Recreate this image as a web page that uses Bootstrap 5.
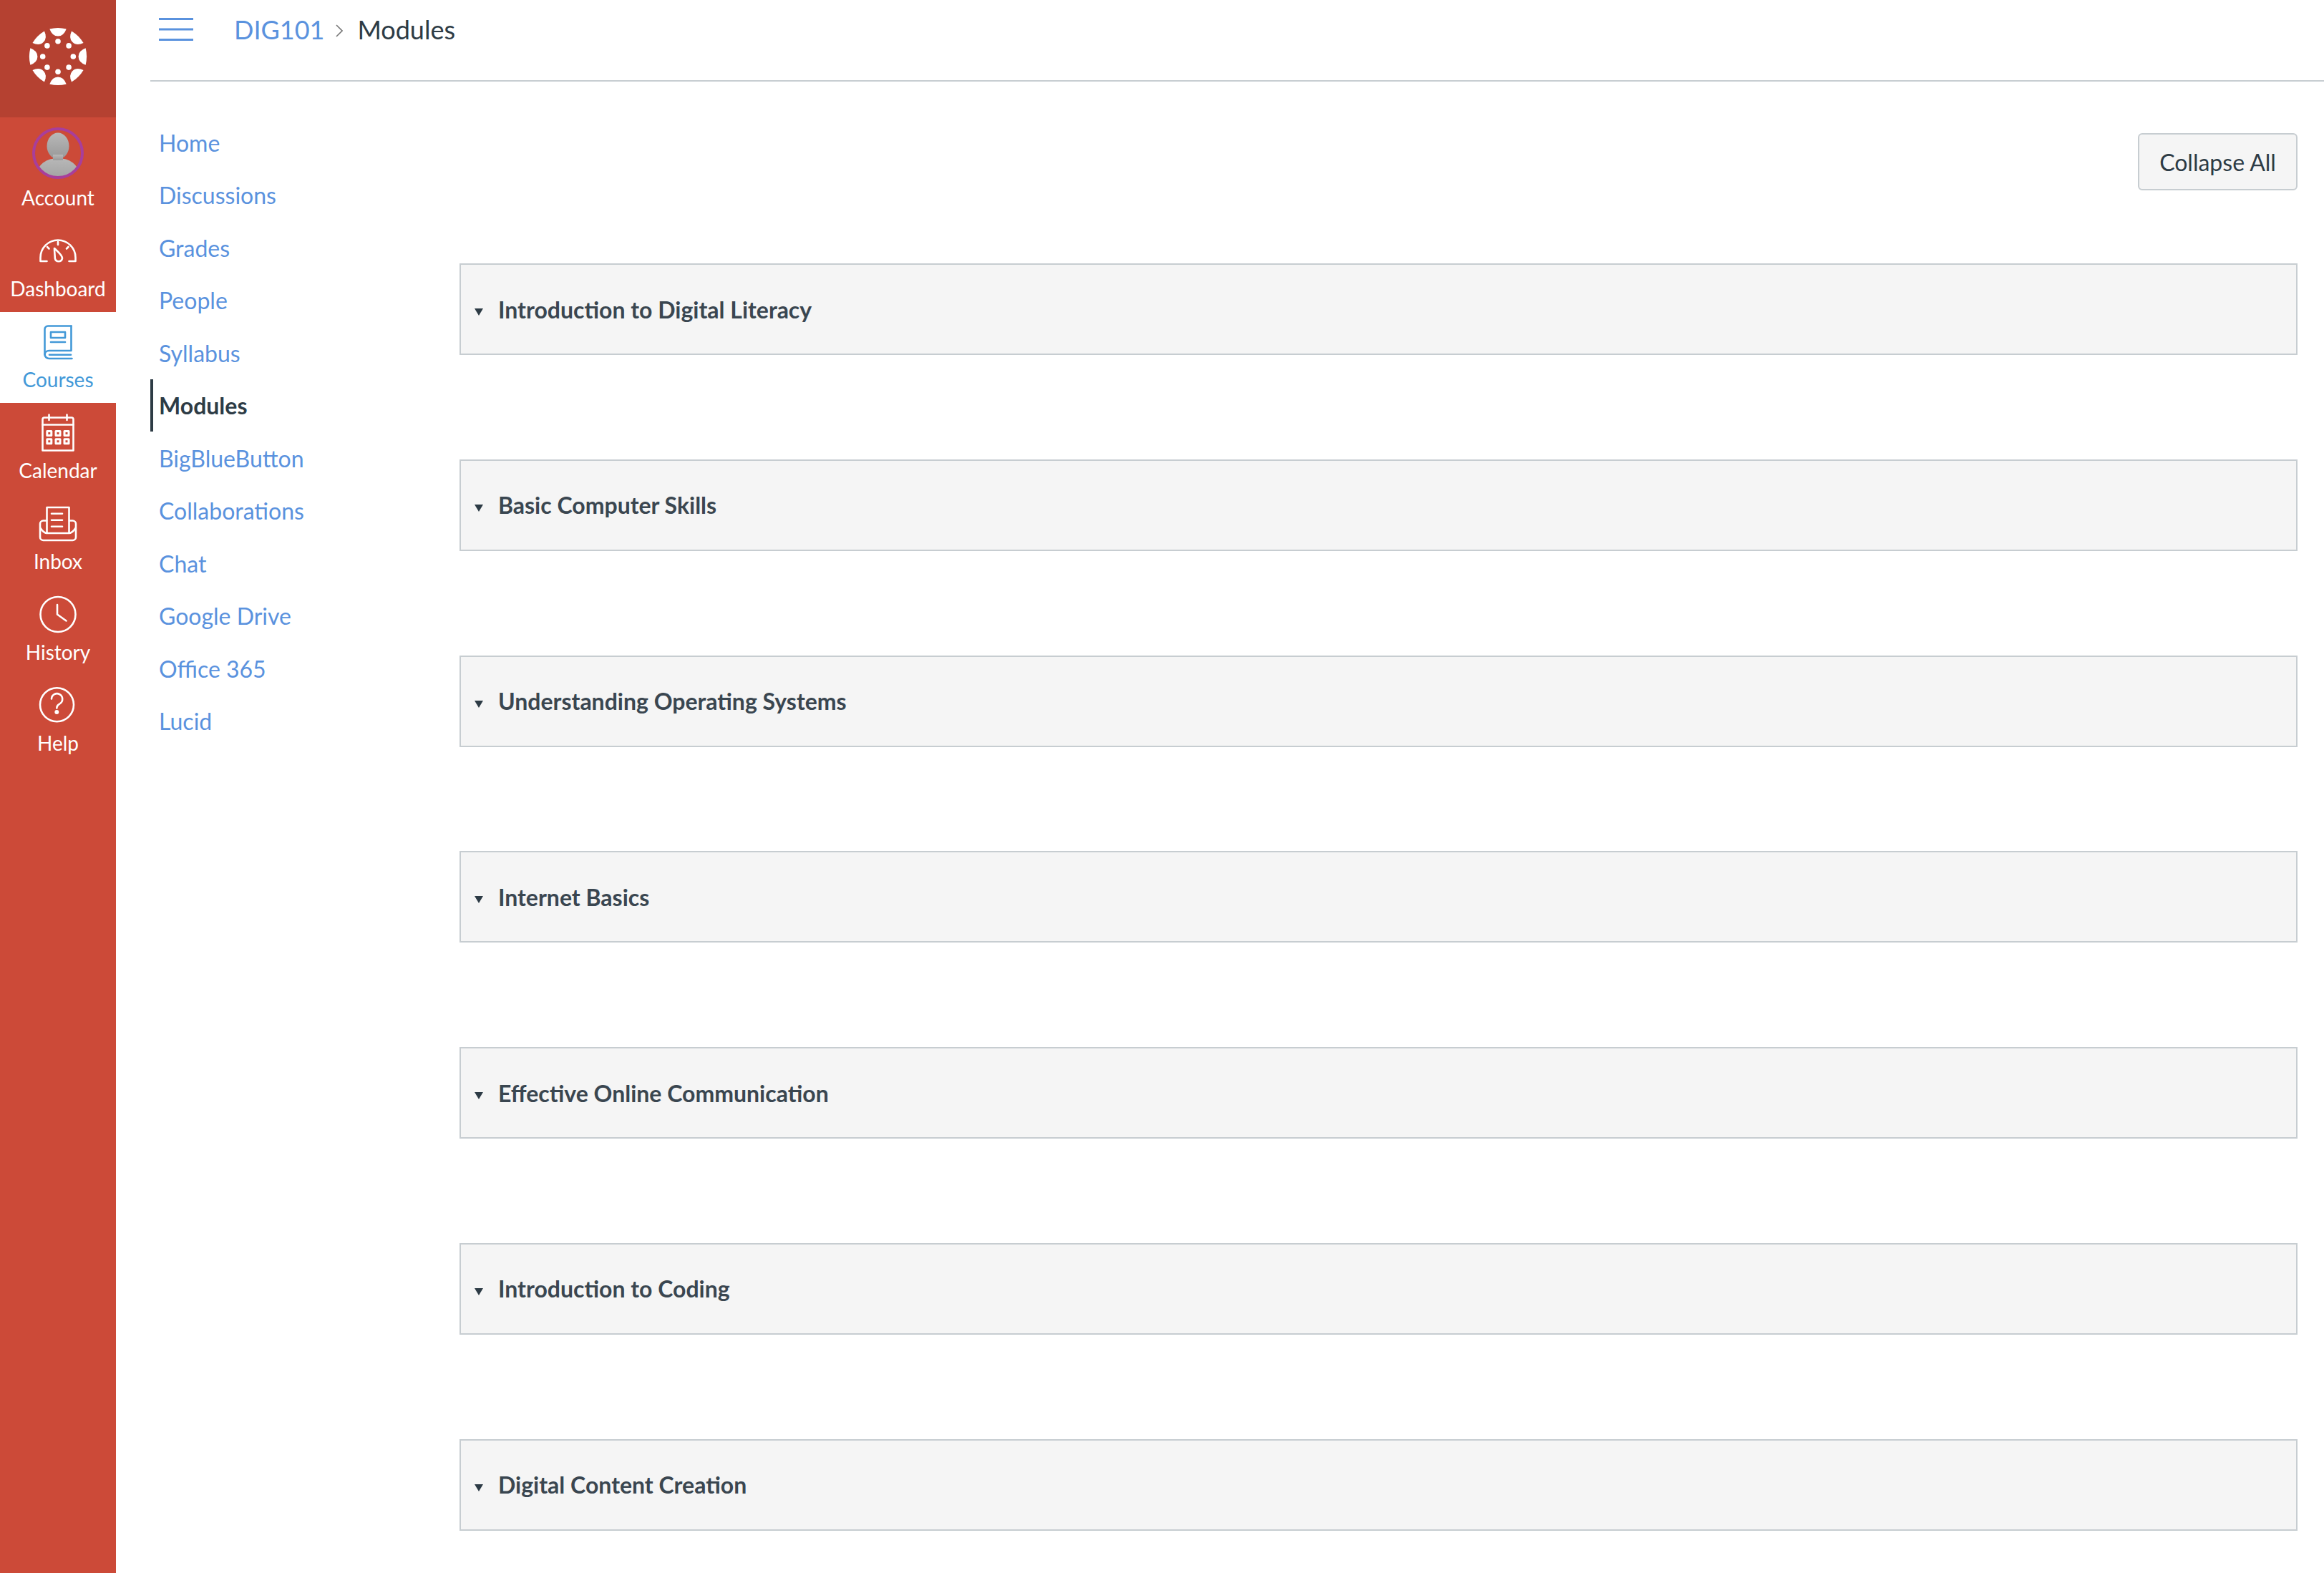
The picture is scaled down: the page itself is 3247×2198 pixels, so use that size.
<!doctype html>
<html lang="en">
<head>
<meta charset="utf-8">
<title>Modules</title>
<link href="https://cdn.jsdelivr.net/npm/bootstrap@5.3.0/dist/css/bootstrap.min.css" rel="stylesheet">
<style>
html,body{height:100%;overflow:hidden}
body{font-family:"Lato","Liberation Sans",sans-serif;color:#2d3b45;font-size:32px;background:#fff}
.shell{min-height:2198px}
.gnav{width:162px;flex:none;background:#cc4a38;color:#fff}
.gnav-logo{height:164px;background:#b54131;padding-bottom:6px}
.gnav-item{height:127px;padding-top:11px;color:#fff;text-decoration:none;font-size:28px;line-height:34px}
.gnav-item svg{display:block;fill:none;stroke:currentColor;stroke-width:2.6;stroke-linecap:round;stroke-linejoin:round}
.gnav-item span{margin-top:6px}
.gnav-account{height:145px;padding-top:14px}
.gnav-account span{margin-top:9px}
.gnav-active{background:#fff;color:#4399d8}
.work{min-width:0}
.topstrip{margin-left:48px;border-bottom:2px solid #c7cdd1;height:114px;padding-left:12px;padding-bottom:30px}
.burger{width:48px;height:32px;margin-right:57px;flex:none;padding:0;border:0;background:none}
.burger svg{display:block}
.trail{font-size:36px;line-height:40px;margin:0}
.trail a{color:#5a92de;text-decoration:none}
.trail .sep{width:10px;height:18px;margin:4px 20px 0 16px}
.coursenav{width:432px;flex:none;margin-left:48px;padding-top:48px}
.coursenav a{height:73.5px;padding-left:8px;padding-top:2px;color:#5a92de;text-decoration:none;border-left:4px solid transparent;line-height:1}
.coursenav a.on{color:#2d3b45;font-weight:700;border-left-color:#2d3b45}
.modcol{padding:72px 37px 0 0;min-width:0}
.btn.collapse-btn{height:80px;width:223px;padding:1px 0 0;font-size:32px;color:#2d3b45;background:#f5f5f5;border:2px solid #c7cdd1;border-radius:6px;margin-bottom:102px}
.modrow{height:128px;margin-bottom:145.8px;background:#f5f5f5;border:2px solid #c7cdd1;padding:1px 0 0 19px;font-weight:700;font-size:32px;color:#3a4650}
.modrow svg{margin:7px 21px 0 0;flex:none}
</style>
</head>
<body>
<div class="d-flex shell">
  <nav class="gnav d-flex flex-column">
    <div class="gnav-logo d-flex align-items-center justify-content-center">
      <svg width="90" height="90" viewBox="-45 -45 90 90" fill="#fff" aria-label="Canvas">
        <g id="lg">
          <path id="wd" d="M-11.7-38.6Q0-41.6 11.7-38.6Q8-28.6 0-28.6Q-8-28.6-11.7-38.6Z"/>
          <use href="#wd" transform="rotate(45)"/><use href="#wd" transform="rotate(90)"/><use href="#wd" transform="rotate(135)"/><use href="#wd" transform="rotate(180)"/><use href="#wd" transform="rotate(225)"/><use href="#wd" transform="rotate(270)"/><use href="#wd" transform="rotate(315)"/>
          <circle cx="0" cy="-21.3" r="3.8"/><circle cx="15.1" cy="-15.1" r="3.8"/><circle cx="21.3" cy="0" r="3.8"/><circle cx="15.1" cy="15.1" r="3.8"/><circle cx="0" cy="21.3" r="3.8"/><circle cx="-15.1" cy="15.1" r="3.8"/><circle cx="-21.3" cy="0" r="3.8"/><circle cx="-15.1" cy="-15.1" r="3.8"/>
        </g>
      </svg>
    </div>
    <a href="#" class="gnav-item gnav-account d-flex flex-column align-items-center">
      <svg width="72" height="72" viewBox="0 0 72 72" style="stroke:none">
        <defs>
          <linearGradient id="pg" x1="0" y1="0" x2="0" y2="1"><stop offset="0" stop-color="#b8b8b8"/><stop offset="1" stop-color="#989898"/></linearGradient>
          <clipPath id="pc"><circle cx="36" cy="36" r="34"/></clipPath>
        </defs>
        <g clip-path="url(#pc)" fill="url(#pg)">
          <ellipse cx="36" cy="26" rx="15.5" ry="18.5"/>
          <ellipse cx="36" cy="64" rx="29" ry="21"/>
          <rect x="29" y="38" width="14" height="8"/>
        </g>
        <circle cx="36" cy="36" r="34" fill="none" stroke="#a83e9b" stroke-width="4"/>
      </svg>
      <span>Account</span>
    </a>
    <a href="#" class="gnav-item d-flex flex-column align-items-center">
      <svg width="60" height="60" viewBox="0 0 60 60">
        <path d="M14.5 45H5.5V40A24.5 24.5 0 0 1 54.5 40V45H45.5"/>
        <path d="M30 18V22M15 25L17.5 27.5M44.5 25L42 27.5"/>
        <path d="M25 27C29 31 36 36 36 41A5.2 5.2 0 0 1 25.8 41C25.8 37 25 32 25 27Z"/>
      </svg>
      <span>Dashboard</span>
    </a>
    <a href="#" class="gnav-item gnav-active d-flex flex-column align-items-center">
      <svg width="60" height="60" viewBox="0 0 60 60">
        <path d="M48.5 8.5H16A4.5 4.5 0 0 0 11.5 13V48A6 6 0 0 0 17.5 54H49.5"/>
        <path d="M48.5 8.5V43H17.5A6 6 0 0 0 11.5 48.5"/>
        <path d="M18 48.8H48"/>
        <rect x="20" y="17" width="20" height="8"/>
        <path d="M20 31H40"/>
      </svg>
      <span>Courses</span>
    </a>
    <a href="#" class="gnav-item d-flex flex-column align-items-center">
      <svg width="60" height="60" viewBox="0 0 60 60">
        <path d="M11 9.5H49A2.5 2.5 0 0 1 51.5 12V55.5H8.5V12A2.5 2.5 0 0 1 11 9.5Z"/>
        <path d="M8.5 19.5H51.5M17.5 5.5V13M42.5 5.5V13"/>
        <path d="M14.8 28.5h6v6h-6zM27 28.5h6v6h-6zM39 28.5h6v6h-6zM14.8 39.8h6v6h-6zM27 39.8h6v6h-6zM39 39.8h6v6h-6z" stroke-width="3"/>
      </svg>
      <span>Calendar</span>
    </a>
    <a href="#" class="gnav-item d-flex flex-column align-items-center">
      <svg width="60" height="60" viewBox="0 0 60 60">
        <path d="M14.5 44V8H45.5V44"/>
        <path d="M21 16.7H36M21 25.7H36M21 34.7H36"/>
        <path d="M14 26.5H9.5A4.5 4.5 0 0 0 5 31V49.5A4.5 4.5 0 0 0 9.5 54H50.5A4.5 4.5 0 0 0 55 49.5V31A4.5 4.5 0 0 0 50.5 26.5H46"/>
        <path d="M5.5 37C8 41 11 44 15 44H45C49 44 52 41 54.5 37"/>
      </svg>
      <span>Inbox</span>
    </a>
    <a href="#" class="gnav-item d-flex flex-column align-items-center">
      <svg width="60" height="60" viewBox="0 0 60 60">
        <circle cx="30" cy="30.5" r="24.5"/>
        <path d="M29 17V30.5L41.5 39.5"/>
      </svg>
      <span>History</span>
    </a>
    <a href="#" class="gnav-item d-flex flex-column align-items-center">
      <svg width="60" height="60" viewBox="0 0 60 60">
        <circle cx="28.5" cy="29.7" r="23.5"/>
        <path d="M21 21.5A7.6 7.6 0 1 1 33 28C30 30 28.3 31 28.3 34.5"/>
        <circle cx="28.3" cy="40" r="2.2" fill="currentColor" stroke-width="1.5"/>
      </svg>
      <span>Help</span>
    </a>
  </nav>
  <div class="work flex-grow-1 d-flex flex-column">
    <header class="topstrip d-flex align-items-center">
      <button class="burger" aria-label="Menu">
        <svg width="48" height="32" viewBox="0 0 48 32" stroke="#5a92de" stroke-width="2.8"><path d="M0 1.5H48M0 16H48M0 30.5H48"/></svg>
      </button>
      <ol class="trail list-unstyled d-flex align-items-center">
        <li><a href="#">DIG101</a></li>
        <li class="d-flex"><svg class="sep" viewBox="0 0 10 18" fill="none" stroke="#777" stroke-width="1.6"><path d="M1 1L9 9L1 17"/></svg></li>
        <li>Modules</li>
      </ol>
    </header>
    <div class="d-flex flex-grow-1">
      <nav class="coursenav d-flex flex-column">
        <a href="#" class="d-flex align-items-center">Home</a>
        <a href="#" class="d-flex align-items-center">Discussions</a>
        <a href="#" class="d-flex align-items-center">Grades</a>
        <a href="#" class="d-flex align-items-center">People</a>
        <a href="#" class="d-flex align-items-center">Syllabus</a>
        <a href="#" class="d-flex align-items-center on">Modules</a>
        <a href="#" class="d-flex align-items-center">BigBlueButton</a>
        <a href="#" class="d-flex align-items-center">Collaborations</a>
        <a href="#" class="d-flex align-items-center">Chat</a>
        <a href="#" class="d-flex align-items-center">Google Drive</a>
        <a href="#" class="d-flex align-items-center">Office 365</a>
        <a href="#" class="d-flex align-items-center">Lucid</a>
      </nav>
      <main class="modcol flex-grow-1 d-flex flex-column">
        <div class="d-flex justify-content-end"><button class="btn collapse-btn">Collapse All</button></div>
        <div class="modrow d-flex align-items-center"><svg width="12" height="10" viewBox="0 0 12 10" fill="#2d3b45"><path d="M0 0H12L6 10Z"/></svg>Introduction to Digital Literacy</div>
        <div class="modrow d-flex align-items-center"><svg width="12" height="10" viewBox="0 0 12 10" fill="#2d3b45"><path d="M0 0H12L6 10Z"/></svg>Basic Computer Skills</div>
        <div class="modrow d-flex align-items-center"><svg width="12" height="10" viewBox="0 0 12 10" fill="#2d3b45"><path d="M0 0H12L6 10Z"/></svg>Understanding Operating Systems</div>
        <div class="modrow d-flex align-items-center"><svg width="12" height="10" viewBox="0 0 12 10" fill="#2d3b45"><path d="M0 0H12L6 10Z"/></svg>Internet Basics</div>
        <div class="modrow d-flex align-items-center"><svg width="12" height="10" viewBox="0 0 12 10" fill="#2d3b45"><path d="M0 0H12L6 10Z"/></svg>Effective Online Communication</div>
        <div class="modrow d-flex align-items-center"><svg width="12" height="10" viewBox="0 0 12 10" fill="#2d3b45"><path d="M0 0H12L6 10Z"/></svg>Introduction to Coding</div>
        <div class="modrow d-flex align-items-center"><svg width="12" height="10" viewBox="0 0 12 10" fill="#2d3b45"><path d="M0 0H12L6 10Z"/></svg>Digital Content Creation</div>
      </main>
    </div>
  </div>
</div>
<script src="https://cdn.jsdelivr.net/npm/bootstrap@5.3.0/dist/js/bootstrap.bundle.min.js"></script>
</body>
</html>
